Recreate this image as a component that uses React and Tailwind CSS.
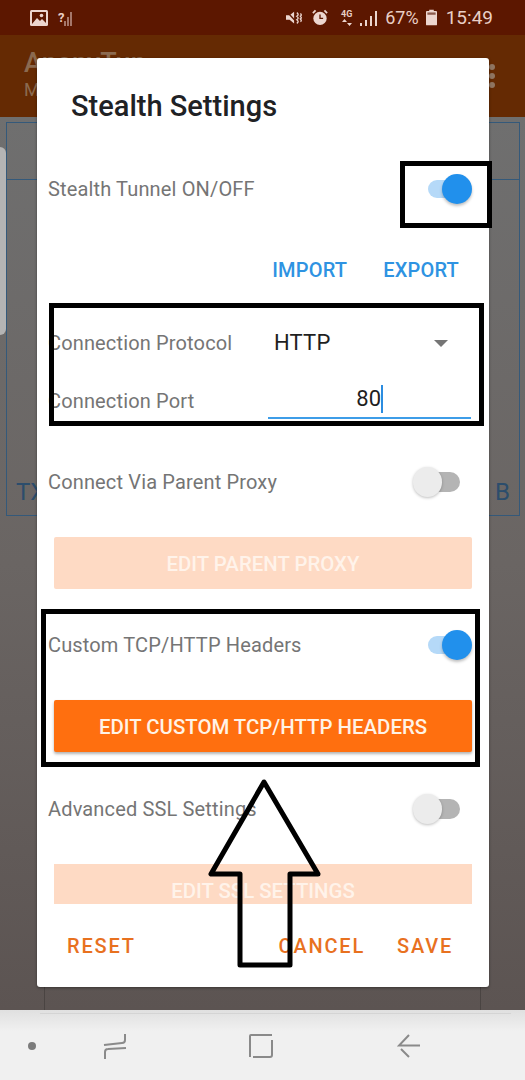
import React from "react";

function Toggle({ on }) {
  return on ? (
    <div className="relative w-[46px] h-[30px] shrink-0">
      <div className="absolute left-[2px] top-[6px] w-[34px] h-[18px] rounded-full bg-[#b5d9f8]" />
      <div className="absolute left-[16px] top-0 w-[30px] h-[30px] rounded-full bg-[#2190ec] shadow-[0_2px_3px_rgba(0,0,0,0.25)]" />
    </div>
  ) : (
    <div className="relative w-[47px] h-[30px] shrink-0">
      <div className="absolute left-[14px] top-[5px] w-[33px] h-[20px] rounded-full bg-[#b4b4b4]" />
      <div className="absolute left-0 top-0 w-[29px] h-[30px] rounded-full bg-[#ececec] shadow-[0_1px_3px_rgba(0,0,0,0.25)]" />
    </div>
  );
}

function Row({ label, on, className }) {
  return (
    <div className={"flex items-center justify-between pl-[11px] " + (on ? "pr-[17px] " : "pr-[29px] ") + className}>
      <span className="text-[20px] leading-[30px] text-[#757575] tracking-[0.15px]">{label}</span>
      <Toggle on={on} />
    </div>
  );
}

function Wide({ children, dim, className }) {
  return (
    <div
      className={
        "mx-[17px] flex items-center justify-center rounded-[2px] text-[20.4px] font-medium " +
        (dim
          ? "bg-[#fedac4] text-[#fff3ea] "
          : "bg-[#ff6f0f] text-[#fff3e6] shadow-[0_2px_3px_rgba(0,0,0,0.3)] ") +
        className
      }
    >
      {children}
    </div>
  );
}

function StatusBar() {
  return (
    <div className="h-[35px] shrink-0 bg-[#5c1700] flex items-center justify-between pl-[30px] pr-[32px] text-[#e9cfc6]">
      <div className="flex items-center gap-[10px]">
        <svg width="18" height="16" viewBox="0 0 18 16">
          <rect width="18" height="16" rx="1.5" fill="#ecd6cf" />
          <rect x="2" y="2" width="14" height="12" fill="#5c1700" />
          <path d="M2 14 L7 8 L10 11 L12 9 L16 13 V14 Z" fill="#ecd6cf" />
          <circle cx="11.5" cy="5.5" r="1.8" fill="#ecd6cf" />
        </svg>
        <div className="flex items-end gap-[1px] h-[16px] relative">
          <span className="text-[13px] leading-[16px] font-bold mr-[-1px]">?</span>
          <span className="w-[2px] h-[5px] bg-[#a5776a]" />
          <span className="w-[2px] h-[9px] bg-[#a5776a]" />
          <span className="w-[2px] h-[14px] bg-[#a5776a]" />
        </div>
      </div>
      <div className="flex items-center">
        <svg width="18" height="16" viewBox="0 0 20 16" className="mr-[8px]">
          <path d="M0 5 H4 L9 1 V14 L4 10 H0 Z" fill="#ecd6cf" />
          <path d="M1 1 L14 15" stroke="#5c1700" strokeWidth="1.5" />
          <path d="M12 2 q3 2 0 4 q3 2 0 4 q3 2 0 4 M16 3 q2 2 0 3 q2 2 0 3 q2 2 0 3" fill="none" stroke="#ecd6cf" strokeWidth="1.5" />
        </svg>
        <svg width="16" height="17" viewBox="0 0 18 18" className="mr-[12px]">
          <circle cx="9" cy="10" r="7.5" fill="#ecd6cf" />
          <path d="M9 5.5 V10 H12.5" fill="none" stroke="#5c1700" strokeWidth="1.5" />
          <path d="M1 4 L4 1 M17 4 L14 1" stroke="#ecd6cf" strokeWidth="2" />
        </svg>
        <div className="w-[13px] flex flex-col items-center mr-[7px] text-[9px] leading-[9px] font-bold">
          <span>4G</span>
          <svg width="10" height="7" viewBox="0 0 10 7">
            <path d="M2.5 0 L5 3 H0 Z M7.5 7 L5 4 H10 Z" fill="#ecd6cf" />
          </svg>
        </div>
        <div className="flex items-end gap-[3px] h-[16px] mr-[8px]">
          <span className="w-[2px] h-[3px] bg-[#ecd6cf]" />
          <span className="w-[2px] h-[6px] bg-[#ecd6cf]" />
          <span className="w-[2px] h-[10px] bg-[#ecd6cf]" />
          <span className="w-[2px] h-[15px] bg-[#ecd6cf]" />
        </div>
        <span className="text-[18px] leading-[20px] mr-[7px]">67%</span>
        <svg width="11" height="17" viewBox="0 0 12 17" className="mr-[9px]">
          <path d="M3.5 0 H8.5 V1.5 H11 A1 1 0 0 1 12 2.5 V16 A1 1 0 0 1 11 17 H1 A1 1 0 0 1 0 16 V2.5 A1 1 0 0 1 1 1.5 H3.5 Z" fill="#ecd6cf" />
          <rect x="1.5" y="3" width="9" height="2.5" fill="#8a5a4c" />
        </svg>
        <span className="text-[19px] leading-[20px]">15:49</span>
      </div>
    </div>
  );
}

function NavBar() {
  return (
    <div className="h-[70px] shrink-0 bg-gradient-to-b from-[#e0e0e0] to-[#f0f0f0] to-[30%] flex items-center relative">
      <div className="absolute left-[40px] right-[14px] top-[3px] h-px bg-[#d4d4d4]" />
      <div className="w-[8px] h-[8px] rounded-full bg-[#7b7b7b] ml-[28px] mt-[2px]" />
      <svg width="24" height="27" viewBox="0 0 24 27" className="ml-[67px] mt-[2px]" fill="none" stroke="#8a8a8a" strokeWidth="2" strokeLinejoin="round">
        <path d="M22 1 V7 Q22 10 19 10 L1 12" />
        <path d="M2 26 V19 Q2 16 5 16 L23 15" />
      </svg>
      <svg width="24" height="24" viewBox="0 0 24 24" className="ml-[122px] mt-[2px]" fill="none" stroke="#8a8a8a" strokeWidth="2">
        <path d="M1 23 V2 Q1 1 2 1 H23 M23 6 V21 Q23 23 21 23 H4" />
      </svg>
      <svg width="23" height="24" viewBox="0 0 23 24" className="ml-[124px] mt-[2px]" fill="none" stroke="#8a8a8a" strokeWidth="2">
        <path d="M12 1 L2 11.5 H23 M4 15 L12 23" />
      </svg>
    </div>
  );
}

export default function App() {
  return (
    <div className="relative w-[525px] h-[1080px] overflow-hidden flex flex-col bg-[#5c5452] font-['Roboto',sans-serif]">
      <StatusBar />
      <div className="relative h-[82px] shrink-0 bg-[#652a03] pl-[24px] pt-[12px] text-[#8b6a50]">
        <div className="text-[27px] leading-[32px] font-medium">AnonyTun</div>
        <div className="text-[18px] leading-[22px]">M</div>
        <div className="absolute right-[30px] top-[29px] flex flex-col gap-[3px]">
          <span className="w-[6px] h-[6px] rounded-full bg-[#8f7561]" />
          <span className="w-[6px] h-[6px] rounded-full bg-[#8f7561]" />
          <span className="w-[6px] h-[6px] rounded-full bg-[#8f7561]" />
        </div>
      </div>
      <div className="flex-1 relative bg-gradient-to-b from-[#6f6f6f] via-[#6a6563] to-[#5c5452]">
        <div className="absolute left-[6px] right-[5px] top-[5px] h-[394px] border-[1.5px] border-[#34597a]">
          <div className="h-[57px] border-b-[1.5px] border-[#34597a]" />
          <div className="absolute left-[9px] bottom-[10px] text-[24px] leading-[26px] text-[#2c4d6c]">TX</div>
          <div className="absolute right-[9px] bottom-[10px] text-[24px] leading-[26px] text-[#2c4d6c]">B</div>
        </div>
        <div className="absolute left-0 top-[30px] w-[6px] h-[188px] rounded-r-[6px] bg-[#b4b4b4]" />
        <div className="absolute left-[44px] right-[44px] bottom-0 h-[30px] border-x-[1.5px] border-[#4a4442]" />
      </div>
      <NavBar />

      <div className="absolute left-[37px] top-[58px] w-[452px] h-[929px] rounded-[3px] bg-white shadow-[0_1px_3px_rgba(0,0,0,0.4)] flex flex-col">
        <div className="pl-[34px] pt-[31px] text-[29px] leading-[34px] font-medium text-[#202124]">Stealth Settings</div>
        <Row label="Stealth Tunnel ON/OFF" on className="mt-[51px] h-[30px]" />
        <div className="flex justify-end gap-[36px] pr-[30px] mt-[54px] text-[20px] leading-[24px] font-medium tracking-[0.2px] text-[#2e93e2]">
          <span>IMPORT</span>
          <span>EXPORT</span>
        </div>
        <div className="flex items-center pl-[11px] mt-[46px] h-[30px]">
          <span className="w-[226px] text-[20px] leading-[30px] text-[#757575] tracking-[0.15px]">Connection Protocol</span>
          <span className="text-[22px] leading-[30px] text-[#1f1f1f] tracking-[0.2px]">HTTP</span>
          <svg width="14" height="7" viewBox="0 0 14 7" className="ml-[103px]"><path d="M0 0 H14 L7 7 Z" fill="#757575" /></svg>
        </div>
        <div className="flex mt-[21px] pl-[11px] h-[47px]">
          <span className="w-[220px] pt-[7px] text-[20px] leading-[30px] text-[#757575] tracking-[0.15px]">Connection Port</span>
          <div className="w-[203px] h-[40px] border-b-[2px] border-[#3d9de8] flex justify-end pr-[88px] items-start pt-[6px]">
            <span className="text-[22px] leading-[28px] text-[#1f1f1f] border-r-[2px] border-[#2b8ce0] h-[28px]">80</span>
          </div>
        </div>
        <Row label="Connect Via Parent Proxy" className="mt-[41px] h-[30px]" />
        <Wide dim className="mt-[40px] h-[52px] pt-[2px]">EDIT PARENT PROXY</Wide>
        <Row label="Custom TCP/HTTP Headers" on className="mt-[41px] h-[30px]" />
        <Wide className="mt-[40px] h-[52px] pt-[2px]">EDIT CUSTOM TCP/HTTP HEADERS</Wide>
        <Row label="Advanced SSL Settings" className="mt-[42px] h-[30px]" />
        <Wide dim className="mt-[40px] h-[40px] rounded-none items-start pt-[15px] overflow-hidden leading-[24px]">EDIT SSL SETTINGS</Wide>
        <div className="flex justify-between pl-[30px] pr-[36px] mt-[30px] text-[20px] leading-[24px] font-medium tracking-[1.8px] text-[#e8711f]">
          <span>RESET</span>
          <div className="flex gap-[32px]">
            <span>CANCEL</span>
            <span>SAVE</span>
          </div>
        </div>
      </div>

      <div className="absolute left-[400px] top-[161px] w-[92px] h-[67px] border-[5px] border-black" />
      <div className="absolute left-[49px] top-[303px] w-[435px] h-[123px] border-[5px] border-black" />
      <div className="absolute left-[41px] top-[609px] w-[439px] h-[158px] border-[5px] border-black" />
      <svg className="absolute left-[205px] top-[776px]" width="120" height="196" viewBox="0 0 120 196">
        <path d="M59 6 L6 98 H35 V189 H85 V98 H113 Z" fill="none" stroke="#000" strokeWidth="5" strokeLinejoin="round" />
      </svg>
    </div>
  );
}
